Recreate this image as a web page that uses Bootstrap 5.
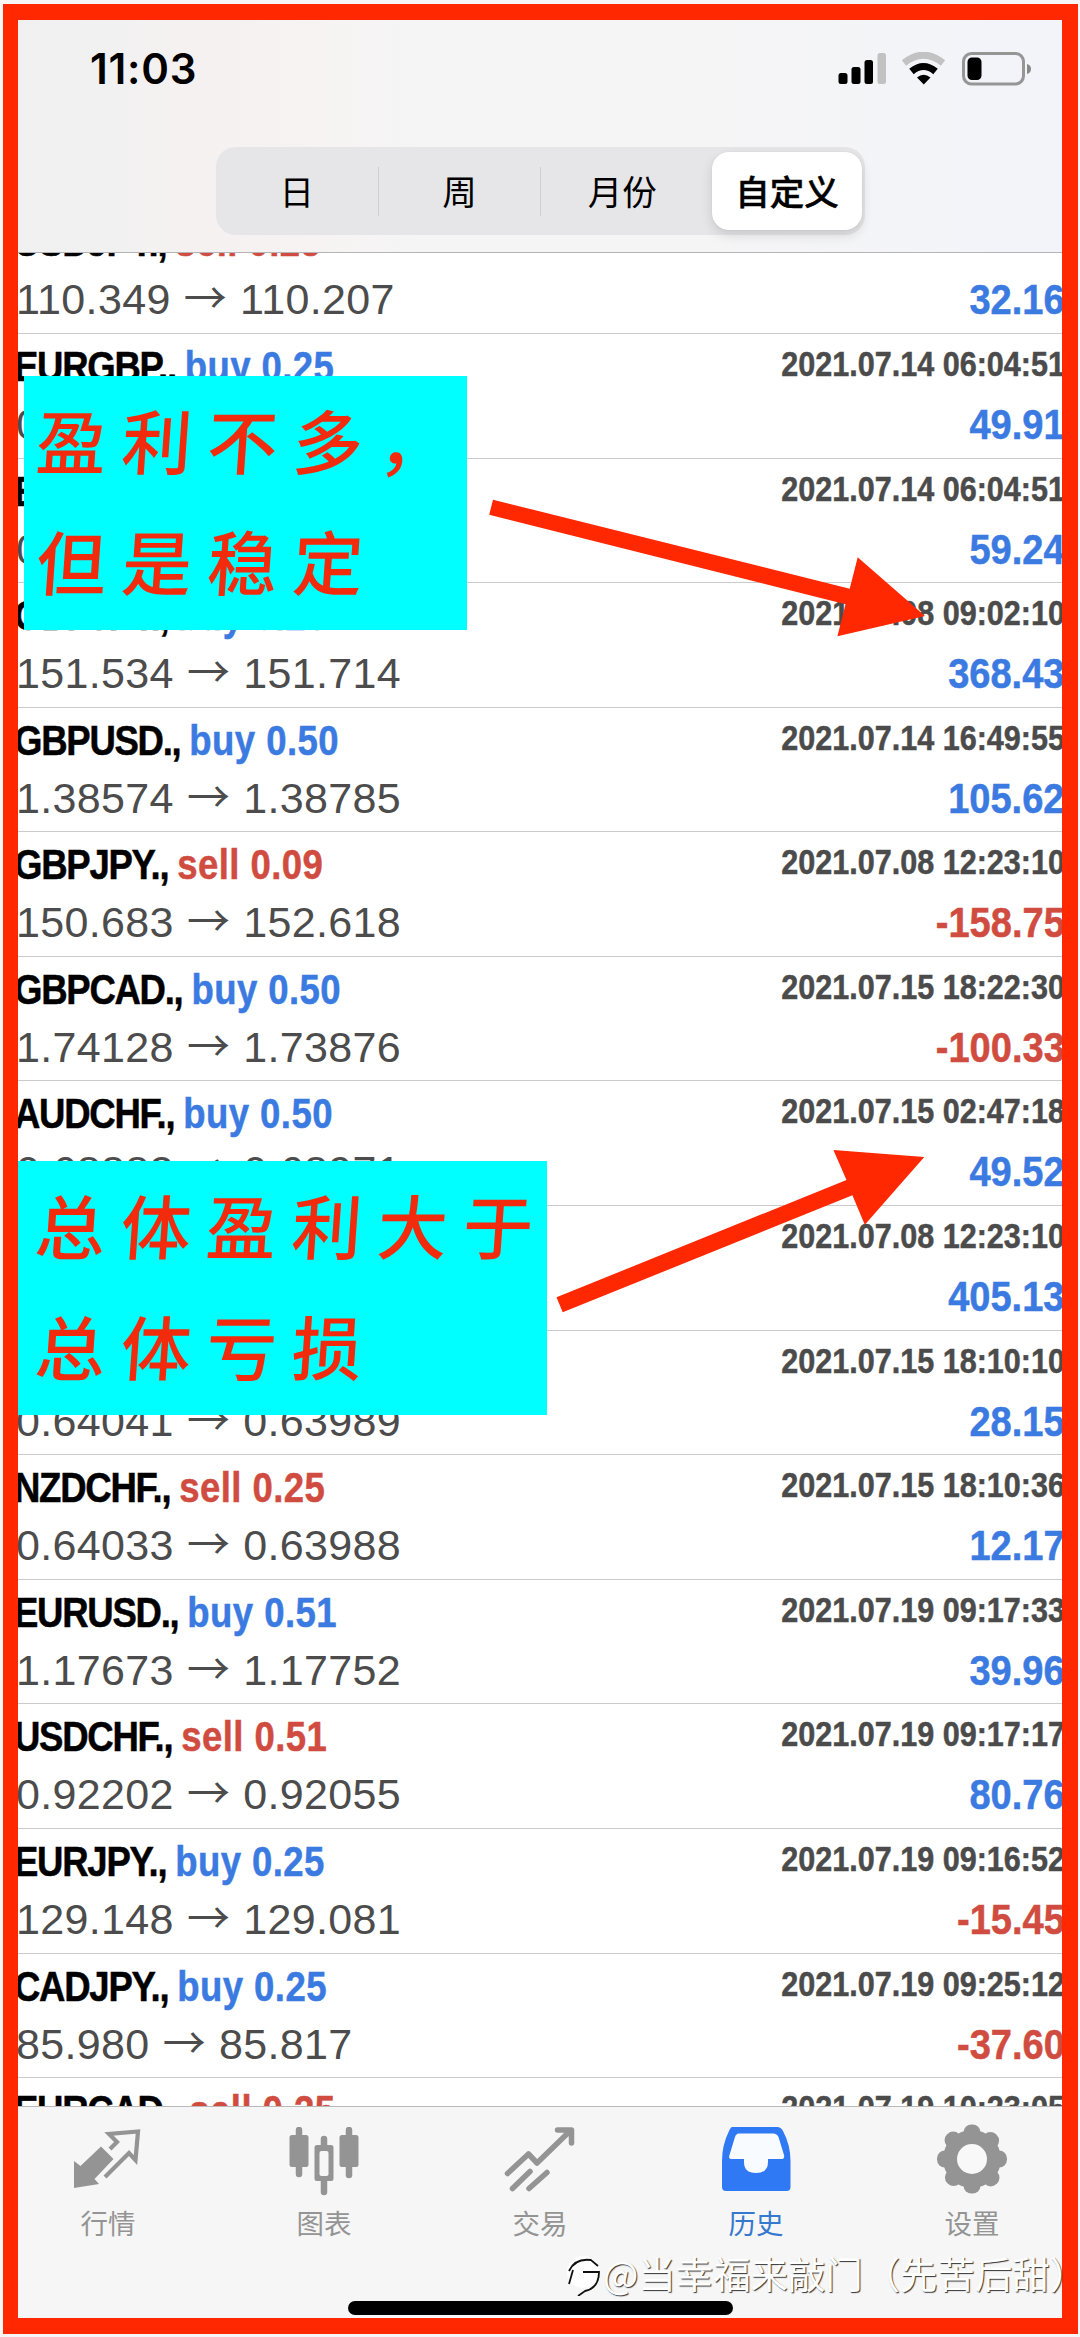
<!DOCTYPE html>
<html lang="zh-CN">
<head>
<meta charset="utf-8">
<meta name="viewport" content="width=device-width, initial-scale=1">
<title>历史</title>
<link href="https://cdn.jsdelivr.net/npm/bootstrap@5.3.0/dist/css/bootstrap.min.css" rel="stylesheet">
<style>
body{width:1080px;height:2337px;margin:0;overflow:hidden;background:#f6f6f6;font-family:"Liberation Sans","Noto Sans CJK SC",sans-serif;color:#000}
.screen{width:1080px;height:2337px}
.topbar{height:253px;border-bottom:1px solid #b4b4b6;background:linear-gradient(90deg,#f0f0f0 0,#f2f1f1 120px,#f6f1f1 200px,#f7f3f3 320px,#f5f5f5 420px,#f5f5f6 720px,#f3f4f9 1000px,#f3f4f9 100%)}
.statusbar{height:147px;padding:43px 49.5px 0 90px}
.clock{font:600 42px/52px Inter,sans-serif;letter-spacing:.8px}
.statusbar svg{display:block;margin-top:9px}
.segments{width:649px;height:88px;margin-left:216px;border-radius:20px;background:#e6e5e8;font:400 34.5px/88px "Noto Sans CJK SC",sans-serif}
.segments .seg{flex:1 1 0;text-align:center;height:88px;line-height:86px}
.segments .rule{width:1px;height:49px;background:#cfcfd2}
.segments .on{flex:0 0 150px;height:78px;line-height:76px;margin:0 3px 0 9px;border-radius:17px;background:#fff;font-weight:500;-webkit-text-stroke:.5px #000;box-shadow:0 5px 12px rgba(0,0,0,.13),0 0 2px rgba(0,0,0,.06)}
.deals{background:#fff}
.deals-in{margin-top:-43.6px}
.deal{height:124.583px;padding:3px 15px 0 14px;border-bottom:1px solid #cbcbcb;flex:none}
.deal .ln{height:58px;line-height:58px;font-size:43px;white-space:nowrap}
.sym,.when,.sum{display:inline-block;font-weight:700;-webkit-text-stroke:.5px currentColor}
.sym{transform:scaleX(.85);transform-origin:0 0;letter-spacing:-1.5px;height:58px}
.sym b{letter-spacing:.5px}
.when{height:58px;font-size:35px;line-height:54px;vertical-align:top;color:#4b4b4b;transform:scaleX(.873);transform-origin:100% 0}
.sum{transform:scaleX(.885);transform-origin:100% 0}
.up{color:#3b7ae0}.dn{color:#d04c41}
.deal .px{color:#4c4c4c;padding-left:2px;letter-spacing:.35px}
.px i{font:400 43px/1 "Noto Sans CJK SC",sans-serif;margin:0 13px}
.tabbar{height:231px;background:#f6f6f6;border-top:1px solid #b9b9b9;padding-top:20px}
.tabbar .tab{width:216px;color:#949494;font:400 27.5px/34px "Noto Sans CJK SC",sans-serif}
.tabbar .tab.on{color:#3579cf}
.tabbar svg{display:block;margin-bottom:4px}
.frame{left:3px;top:4px;width:1075px;height:2330px;border:solid #ff2800;border-width:16px 16px 16px 15.5px;z-index:5}
.edge{inset:0;z-index:4;border:solid #f6f6f6;border-width:4px 2px 3px 3px}
.note{background:#0ff;color:#f22b0c;font:500 70px/121px "Noto Sans CJK SC",sans-serif;z-index:3;white-space:nowrap}
.note div{letter-spacing:15.5px;transform:skewX(-4deg)}
.note1{left:23.5px;top:375.5px;width:443px;height:254px;padding:2px 0 0 13px}
.note2{left:18px;top:1160.5px;width:528.5px;height:254px;padding:2px 0 0 18px}
.arrows{left:0;top:0;z-index:6}
.home{left:348px;top:2300.5px;width:385px;height:14px;border-radius:7px;background:#000;z-index:2}
.wm{left:565px;top:2249px;z-index:7;color:#fff;font:400 37.4px/48px "Noto Sans CJK SC",sans-serif;text-shadow:1px 1px 1px #333;white-space:nowrap}
</style>
</head>
<body>
<div class="screen position-relative d-flex flex-column overflow-hidden">
<header class="topbar flex-shrink-0">
  <div class="statusbar d-flex justify-content-between">
    <div class="clock">11:03</div>
    <svg width="195" height="34" viewBox="0 0 195 34">
      <g><rect x="2.5" y="21" width="9" height="11" rx="2.5"/><rect x="15.500" y="15" width="9" height="17" rx="2.500"/><rect x="28.500" y="8" width="8.500" height="24" rx="2.500"/><rect x="41.500" y="1" width="8.500" height="31" rx="2.500" fill="#c2c2c2"/></g>
      <g fill="none" stroke-width="7"><path d="M68 11Q87.500-4.500 107 11" stroke="#c2c2c2"/><path d="M75.500 19.500Q87.500 9.500 99.500 19.500" stroke="#000"/></g>
      <path d="M81 25.500Q87.500 20 94.500 25.500L87.800 32.500Z"/>
      <rect x="127.500" y="1.500" width="60" height="30.500" rx="8" fill="none" stroke="#969696" stroke-width="3"/><rect x="131.500" y="5.500" width="14" height="22.500" rx="4.500"/>
      <path d="M191 12q4 1 4 5t-4 5z" fill="#888"/>
    </svg>
  </div>
  <nav class="segments d-flex align-items-center">
    <div class="seg">日</div><div class="rule"></div><div class="seg">周</div><div class="rule"></div><div class="seg">月份</div><div class="on text-center">自定义</div>
  </nav>
</header>
<main class="deals flex-fill overflow-hidden">
<div class="deals-in d-flex flex-column">
<div class="deal d-flex justify-content-between"><div><div class="ln"><span class="sym">USDJPY., <b class="dn">sell 0.25</b></span></div><div class="ln px">110.349<i>→</i>110.207</div></div><div class="text-end"><div class="ln"><span class="when">2021.07.15 12:58:18</span></div><div class="ln"><span class="sum up">32.16</span></div></div></div>
<div class="deal d-flex justify-content-between"><div><div class="ln"><span class="sym">EURGBP., <b class="up">buy 0.25</b></span></div><div class="ln px">0.85156<i>→</i>0.85302</div></div><div class="text-end"><div class="ln"><span class="when">2021.07.14 06:04:51</span></div><div class="ln"><span class="sum up">49.91</span></div></div></div>
<div class="deal d-flex justify-content-between"><div><div class="ln"><span class="sym">EURGBP., <b class="up">buy 0.25</b></span></div><div class="ln px">0.85129<i>→</i>0.85302</div></div><div class="text-end"><div class="ln"><span class="when">2021.07.14 06:04:51</span></div><div class="ln"><span class="sum up">59.24</span></div></div></div>
<div class="deal d-flex justify-content-between"><div><div class="ln"><span class="sym">GBPJPY., <b class="up">buy 0.23</b></span></div><div class="ln px">151.534<i>→</i>151.714</div></div><div class="text-end"><div class="ln"><span class="when">2021.07.08 09:02:10</span></div><div class="ln"><span class="sum up">368.43</span></div></div></div>
<div class="deal d-flex justify-content-between"><div><div class="ln"><span class="sym">GBPUSD., <b class="up">buy 0.50</b></span></div><div class="ln px">1.38574<i>→</i>1.38785</div></div><div class="text-end"><div class="ln"><span class="when">2021.07.14 16:49:55</span></div><div class="ln"><span class="sum up">105.62</span></div></div></div>
<div class="deal d-flex justify-content-between"><div><div class="ln"><span class="sym">GBPJPY., <b class="dn">sell 0.09</b></span></div><div class="ln px">150.683<i>→</i>152.618</div></div><div class="text-end"><div class="ln"><span class="when">2021.07.08 12:23:10</span></div><div class="ln"><span class="sum dn">-158.75</span></div></div></div>
<div class="deal d-flex justify-content-between"><div><div class="ln"><span class="sym">GBPCAD., <b class="up">buy 0.50</b></span></div><div class="ln px">1.74128<i>→</i>1.73876</div></div><div class="text-end"><div class="ln"><span class="when">2021.07.15 18:22:30</span></div><div class="ln"><span class="sum dn">-100.33</span></div></div></div>
<div class="deal d-flex justify-content-between"><div><div class="ln"><span class="sym">AUDCHF., <b class="up">buy 0.50</b></span></div><div class="ln px">0.68882<i>→</i>0.68971</div></div><div class="text-end"><div class="ln"><span class="when">2021.07.15 02:47:18</span></div><div class="ln"><span class="sum up">49.52</span></div></div></div>
<div class="deal d-flex justify-content-between"><div><div class="ln"><span class="sym">GBPJPY., <b class="dn">sell 0.25</b></span></div><div class="ln px">152.618<i>→</i>150.683</div></div><div class="text-end"><div class="ln"><span class="when">2021.07.08 12:23:10</span></div><div class="ln"><span class="sum up">405.13</span></div></div></div>
<div class="deal d-flex justify-content-between"><div><div class="ln"><span class="sym">NZDCHF., <b class="dn">sell 0.50</b></span></div><div class="ln px">0.64041<i>→</i>0.63989</div></div><div class="text-end"><div class="ln"><span class="when">2021.07.15 18:10:10</span></div><div class="ln"><span class="sum up">28.15</span></div></div></div>
<div class="deal d-flex justify-content-between"><div><div class="ln"><span class="sym">NZDCHF., <b class="dn">sell 0.25</b></span></div><div class="ln px">0.64033<i>→</i>0.63988</div></div><div class="text-end"><div class="ln"><span class="when">2021.07.15 18:10:36</span></div><div class="ln"><span class="sum up">12.17</span></div></div></div>
<div class="deal d-flex justify-content-between"><div><div class="ln"><span class="sym">EURUSD., <b class="up">buy 0.51</b></span></div><div class="ln px">1.17673<i>→</i>1.17752</div></div><div class="text-end"><div class="ln"><span class="when">2021.07.19 09:17:33</span></div><div class="ln"><span class="sum up">39.96</span></div></div></div>
<div class="deal d-flex justify-content-between"><div><div class="ln"><span class="sym">USDCHF., <b class="dn">sell 0.51</b></span></div><div class="ln px">0.92202<i>→</i>0.92055</div></div><div class="text-end"><div class="ln"><span class="when">2021.07.19 09:17:17</span></div><div class="ln"><span class="sum up">80.76</span></div></div></div>
<div class="deal d-flex justify-content-between"><div><div class="ln"><span class="sym">EURJPY., <b class="up">buy 0.25</b></span></div><div class="ln px">129.148<i>→</i>129.081</div></div><div class="text-end"><div class="ln"><span class="when">2021.07.19 09:16:52</span></div><div class="ln"><span class="sum dn">-15.45</span></div></div></div>
<div class="deal d-flex justify-content-between"><div><div class="ln"><span class="sym">CADJPY., <b class="up">buy 0.25</b></span></div><div class="ln px">85.980<i>→</i>85.817</div></div><div class="text-end"><div class="ln"><span class="when">2021.07.19 09:25:12</span></div><div class="ln"><span class="sum dn">-37.60</span></div></div></div>
<div class="deal d-flex justify-content-between"><div><div class="ln"><span class="sym">EURCAD., <b class="dn">sell 0.25</b></span></div></div><div class="text-end"><div class="ln"><span class="when">2021.07.19 10:23:05</span></div></div></div>
</div>
</main>
<footer class="tabbar d-flex align-items-start flex-shrink-0">
  <div class="tab d-flex flex-column align-items-center">
    <svg width="72" height="74" viewBox="0 0 72 74"><path d="M2 34L8.500 39L29 19.500L41.500 32L22.500 52L27 57L2 61Z" fill="#949494"/><path d="M38 22L45 15L37 7L66 4.500L63.500 33L57 26L33 50" fill="none" stroke="#949494" stroke-width="4.200"/></svg>行情</div>
  <div class="tab d-flex flex-column align-items-center">
    <svg width="72" height="74" viewBox="0 0 72 74"><g fill="none" stroke="#949494" stroke-width="6.500" stroke-linecap="round"><path d="M11 3V47M36 12V65M61 3V48"/></g><g fill="#949494"><rect x="1.500" y="8" width="19" height="32" rx="2.500"/><rect x="51.500" y="8" width="19" height="32" rx="2.500"/><rect x="26.500" y="18" width="19" height="36" rx="2.500"/></g><rect x="31.500" y="24" width="9" height="25" rx="2" fill="#f6f6f6"/></svg>图表</div>
  <div class="tab d-flex flex-column align-items-center">
    <svg width="72" height="74" viewBox="0 0 72 74"><g fill="none" stroke="#949494" stroke-width="5.500" stroke-linecap="round" stroke-linejoin="round"><path d="M3.500 46.500L24.500 27L33 36L66.500 3.500M53.500 3H67.500V16M26 44.500L8.500 61.500M43 45.500L25 61.500"/></g></svg>交易</div>
  <div class="tab on d-flex flex-column align-items-center">
    <svg width="72" height="74" viewBox="0 0 72 74"><path fill="#2f7af4" d="M12 0H57Q61 0 63 4Q70.500 18 70.500 34V60Q70.500 64 66.500 64H6Q2 64 2 60V34Q2 18 9 4Q11 0 12 0Z"/><path fill="#f8fbff" d="M19 6.500H53Q57 6.500 58.500 10L64 28Q65 32 61 32H48V35Q48 46 36 46T24 35V32H12Q8 32 9.500 28L15 10Q16 6.500 19 6.500Z"/></svg>历史</div>
  <div class="tab d-flex flex-column align-items-center">
    <svg width="72" height="74" viewBox="0 0 72 74" overflow="visible"><g fill="#949494"><circle cx="36" cy="32" r="29"/><g id="teeth"><rect x="27.500" y="-2.500" width="17" height="69" rx="8"/><rect x="1" y="23.500" width="70" height="17" rx="8"/></g><use href="#teeth" transform="rotate(45 36 32)"/></g><circle cx="36" cy="32" r="15" fill="#f8f8f8"/></svg>设置</div>
</footer>
<div class="edge position-absolute"></div>
<div class="home position-absolute"></div>
<div class="note note1 position-absolute"><div>盈利不多，</div><div>但是稳定</div></div>
<div class="note note2 position-absolute"><div>总体盈利大于</div><div>总体亏损</div></div>
<div class="frame position-absolute"></div>
<svg class="arrows position-absolute" width="1080" height="2337" viewBox="0 0 1080 2337" fill="#ff2800"><path d="M493 499.700L849.700 588.700L857.700 557.300L925 616L837.400 636.300L845.500 604.300L489.200 514.700Z"/><path d="M556.500 1297.300L846.500 1180L833.400 1150L924.300 1157L864.800 1224.700L852.400 1195.300L562.700 1312.300Z"/></svg>
<div class="wm position-absolute d-flex align-items-center"><svg width="38" height="46" viewBox="0 0 38 46"><circle cx="18" cy="22" r="16" fill="#fff"/><path d="M4 21Q10 8 26 10L33 16M4 34L8 20M18 22H34Q34 38 20 41L13 46" fill="none" stroke="#111" stroke-width="1.800"/></svg><span>@当幸福来敲门（先苦后甜）</span></div>
</div>
<script src="https://cdn.jsdelivr.net/npm/bootstrap@5.3.0/dist/js/bootstrap.bundle.min.js"></script>
</body>
</html>
